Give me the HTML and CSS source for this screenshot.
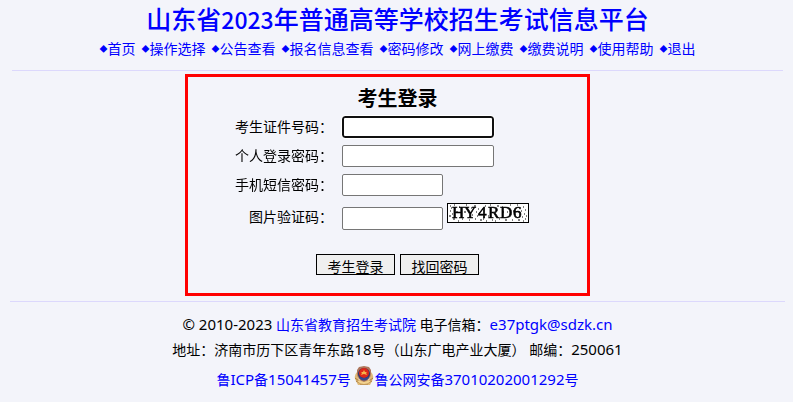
FILE: index.html
```html
<!DOCTYPE html>
<html lang="zh-CN">
<head>
  <meta charset="UTF-8">
  <meta name="viewport" content="width=device-width, initial-scale=1.0">
  <title>山东省2023年普通高等学校招生考试信息平台</title>
  <link rel="stylesheet" href="styles.css">
</head>
<body>

  <header class="header">
    <h1 class="site-title">山东省<span class="year">2023</span>年普通高等学校招生考试信息平台</h1>
    <nav class="nav">
      <a href="#"><span class="mark">◆</span>首页</a>
      <a href="#"><span class="mark">◆</span>操作选择</a>
      <a href="#"><span class="mark">◆</span>公告查看</a>
      <a href="#"><span class="mark">◆</span>报名信息查看</a>
      <a href="#"><span class="mark">◆</span>密码修改</a>
      <a href="#"><span class="mark">◆</span>网上缴费</a>
      <a href="#"><span class="mark">◆</span>缴费说明</a>
      <a href="#"><span class="mark">◆</span>使用帮助</a>
      <a href="#"><span class="mark">◆</span>退出</a>
    </nav>
  </header>

  <main class="main">
    <form class="login">
      <h2>考生登录</h2>
      <div class="row">
        <label for="idcard">考生证件号码：</label>
        <input type="text" id="idcard" autofocus>
      </div>
      <div class="row">
        <label for="password">个人登录密码：</label>
        <input type="password" id="password">
      </div>
      <div class="row">
        <label for="sms">手机短信密码：</label>
        <input type="text" id="sms" class="short">
      </div>
      <div class="row row-captcha">
        <label for="captcha">图片验证码：</label>
        <div class="captcha-field">
          <input type="text" id="captcha" class="short">
          <svg class="captcha" width="82" height="20" viewBox="0 0 82 20" role="img" aria-label="图片验证码">
            <rect x="0.5" y="0.5" width="81" height="19" fill="#fff" stroke="#000"/>
            <text x="5 17 31 41 53 66" y="15">HY4RD6</text>
            <path class="noise" d="M3 3h1M7 2h1M12 4h1M19 2h1M27 3h2M31 6h1M38 3h1M43 2h1M50 3h2M55 4h1M63 2h1M70 2h1M76 4h1M78 7h1M3 8h1M5 11h1M2 13h2M6 16h2M11 18h1M15 16h1M17 9h2M22 17h1M25 12h1M28 16h1M29 9h1M33 17h2M36 16h1M41 13h1M45 17h1M48 18h1M52 16h1M55 9h2M58 17h2M62 12h1M65 17h1M66 8h1M71 17h2M75 14h1M77 11h1M78 16h1M76 18h1M9 9h2M60 9h1M4 5h1M24 5h1M74 8h1M79 13h1M14 12h1M39 18h1M30 13h1"/>
          </svg>
        </div>
      </div>
      <div class="actions">
        <button type="submit">考生登录</button>
        <button type="button">找回密码</button>
      </div>
    </form>
  </main>

  <footer class="footer">
    <p><span class="latin">© 2010-2023</span> <a href="#">山东省教育招生考试院</a> 电子信箱：<a class="latin" href="mailto:e37ptgk@sdzk.cn">e37ptgk@sdzk.cn</a></p>
    <p>地址：济南市历下区青年东路<span class="latin">18</span>号（山东广电产业大厦） 邮编：<span class="latin">250061</span></p>
    <p class="record">
      <a href="#">鲁<span class="latin">ICP</span>备<span class="latin">15041457</span>号</a>
      <a href="#"><svg class="badge" width="20" height="20" viewBox="0 0 20 20" aria-hidden="true">
        <path d="M3 6 Q-1 10 2 15 L4 19 H16 L18 15 Q21 10 17 6 L15 14 H5Z" fill="#dfb978"/>
        <path d="M1 12l4 3M2 15l4 2M19 12l-4 3M18 15l-4 2M6 18h8" stroke="#a8793c" fill="none"/>
        <path d="M10 0 L15 1 L17 4 L17 8 Q17 13 10 16 Q3 13 3 8 L3 4 L5 1Z" fill="#ae765b"/>
        <circle cx="10" cy="8" r="6" fill="#29346e"/>
        <circle cx="10" cy="7" r="5" fill="#dd2719"/>
        <path d="M10 4l1 2h2l-1 1 1 2-3-1-3 1 1-2-1-1h2z" fill="#f6b34b"/>
        <path d="M5 10 Q10 14 15 10 L14 13 Q10 16 6 13Z" fill="#34458d"/>
        <path d="M4 15 Q10 19 16 15" stroke="#f3d391" stroke-width="2" fill="none"/>
      </svg>鲁公网安备<span class="latin">37010202001292</span>号</a>
    </p>
  </footer>

</body>
</html>
```

FILE: styles.css
```css
* {
  box-sizing: border-box;
}

body {
  margin: 0;
  padding: 0 8px 0 10px;
  background: #f3f4fa;
  color: #000;
  font-family: "Noto Sans", "Noto Sans CJK SC", sans-serif;
  font-size: 14px;
  line-height: 20px;
}

a {
  color: #00f;
  text-decoration: none;
}

.header {
  margin: 0 2px;
  padding: 2px 0 11px;
  border-bottom: 1px solid #dcd8fc;
  text-align: center;
}

.site-title {
  margin: 0 0 4px;
  color: #00f;
  font-family: "Noto Sans CJK SC", sans-serif;
  font-size: 25px;
  font-weight: 500;
  line-height: 32px;
}

.year {
  font-size: 23px;
}

.nav {
  display: flex;
  flex-wrap: wrap;
  justify-content: center;
  gap: 6px;
}

.nav a {
  display: flex;
}

.mark {
  font-family: "Noto Sans CJK SC", sans-serif;
  font-size: 8px;
}

.main {
  padding: 3px 20px 5px 0;
}

.login {
  max-width: 405px;
  margin: 0 auto;
  padding: 8px 0 18px;
  border: 3px solid #f00;
}

.login h2 {
  margin: 0 0 0 20px;
  font-size: 20px;
  line-height: 27px;
  text-align: center;
}

.row {
  display: grid;
  grid-template-columns: 145px 1fr;
  column-gap: 9px;
  align-items: center;
  height: 29px;
}

.row label {
  text-align: right;
}

.row input {
  width: 152px;
  height: 22px;
  padding: 1px 2px;
  border: 1px solid #767676;
  border-radius: 2px;
  background: #fff;
  font: inherit;
}

.row input:focus {
  border: 2px solid #101010;
  border-radius: 3px;
  outline: 1px solid #fff;
}

.row .short {
  width: 101px;
}

.row-captcha {
  height: 27px;
  margin-top: 4px;
}

.captcha-field {
  display: flex;
  gap: 4px;
  height: 27px;
}

.captcha-field .short {
  align-self: flex-end;
  height: 23px;
}

.captcha text {
  font-family: "Liberation Serif", serif;
  font-size: 17px;
  stroke: #000;
  stroke-width: 0.6;
}

.noise {
  stroke: #000;
}

.actions {
  display: flex;
  justify-content: center;
  gap: 5px;
  margin: 24px 0 0 20px;
}

.actions button {
  width: 79px;
  height: 21px;
  padding: 3px 0 0;
  border: 1px solid #000;
  background: #efefef;
  color: #000;
  font: inherit;
  line-height: 18px;
}

.footer {
  padding-top: 10px;
  border-top: 1px solid #dcd8fc;
  text-align: center;
}

.footer p {
  margin: 0;
  line-height: 25px;
}

.footer .record {
  line-height: 34px;
}

.latin {
  font-size: 15px;
}

.badge {
  vertical-align: -1px;
}
```
